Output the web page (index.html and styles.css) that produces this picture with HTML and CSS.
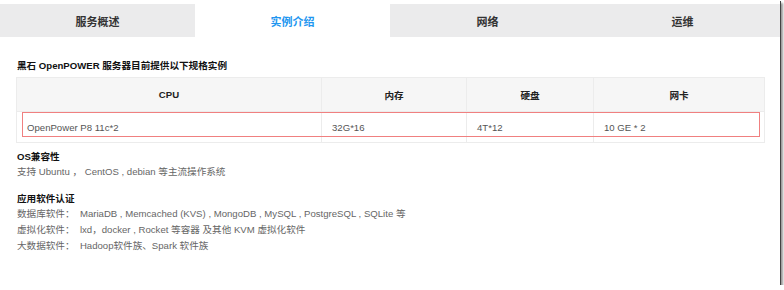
FILE: index.html
```html
<!DOCTYPE html>
<html lang="zh">
<head>
<meta charset="utf-8">
<title>实例介绍</title>
<link rel="stylesheet" href="styles.css">
</head>
<body>
<div class="page">
  <div class="tabs">
    <div class="tab">服务概述</div>
    <div class="tab active">实例介绍</div>
    <div class="tab">网络</div>
    <div class="tab">运维</div>
  </div>
  <div class="content">
    <h3 class="title">黑石 OpenPOWER 服务器目前提供以下规格实例</h3>
    <div class="table-wrap">
      <table class="spec">
        <thead>
          <tr><th class="c1">CPU</th><th class="c2">内存</th><th class="c3">硬盘</th><th class="c4">网卡</th></tr>
        </thead>
        <tbody>
          <tr><td>OpenPower P8 11c*2</td><td>32G*16</td><td>4T*12</td><td>10 GE * 2</td></tr>
        </tbody>
      </table>
      <div class="highlight"></div>
    </div>
    <h4 class="sub">OS兼容性</h4>
    <p class="line">支持 Ubuntu ，&nbsp;CentOS , debian 等主流操作系统</p>
    <h4 class="sub sub2">应用软件认证</h4>
    <p class="line">数据库软件：&nbsp; MariaDB , Memcached (KVS) , MongoDB , MySQL , PostgreSQL , SQLite 等</p>
    <p class="line">虚拟化软件：&nbsp; lxd，docker , Rocket 等容器 及其他 KVM 虚拟化软件</p>
    <p class="line">大数据软件：&nbsp; Hadoop软件族、Spark 软件族</p>
  </div>
</div>
</body>
</html>
```

FILE: styles.css
```css
html, body {
  margin: 0;
  padding: 0;
  background: #ffffff;
}
body {
  font-family: "Liberation Sans", "Noto Sans CJK SC", sans-serif;
  color: #333;
}
.page {
  width: 780px;
  height: 285px;
  background: #ffffff;
  box-shadow: 1px 1px 0 #444, 3px 3px 2px #999;
  padding-top: 4px;
  box-sizing: border-box;
}
.tabs {
  display: grid;
  grid-template-columns: repeat(4, 1fr);
  height: 33px;
  background: #ebebec;
}
.tab {
  display: flex;
  align-items: center;
  justify-content: center;
  font-size: 11px;
  font-weight: bold;
  color: #333;
}
.tab.active {
  background: #ffffff;
  color: #2196f0;
}
.content {
  padding: 23px 15px 0 16px;
}
.title {
  margin: 0 0 5px 1px;
  font-size: 9.6px;
  font-weight: bold;
  color: #111;
  line-height: 12px;
}
.table-wrap {
  position: relative;
  width: 749px;
}
.spec {
  width: 749px;
  border-collapse: collapse;
  font-size: 9.6px;
  table-layout: fixed;
}
.spec th, .spec td {
  border: 1px solid #ececec;
}
.spec th {
  background: #f6f6f6;
  height: 33px;
  font-weight: bold;
  color: #222;
  text-align: center;
  padding: 0;
}
.spec td {
  height: 30px;
  padding: 0 0 0 10px;
  color: #555;
  background: #fff;
}
.c1 { width: 304px; }
.c2 { width: 144px; }
.c3 { width: 126px; }
.highlight {
  position: absolute;
  left: 6px;
  top: 35px;
  width: 736px;
  height: 23px;
  border: 1.5px solid #f08080;
  pointer-events: none;
}
.sub {
  margin: 7px 0 0 1px;
  font-size: 9.6px;
  font-weight: bold;
  color: #111;
  line-height: 14px;
}
.sub2 {
  margin-top: 12px;
}
.line {
  margin: 0 0 0 1px;
  font-size: 9.6px;
  color: #666;
  line-height: 16px;
}
```
